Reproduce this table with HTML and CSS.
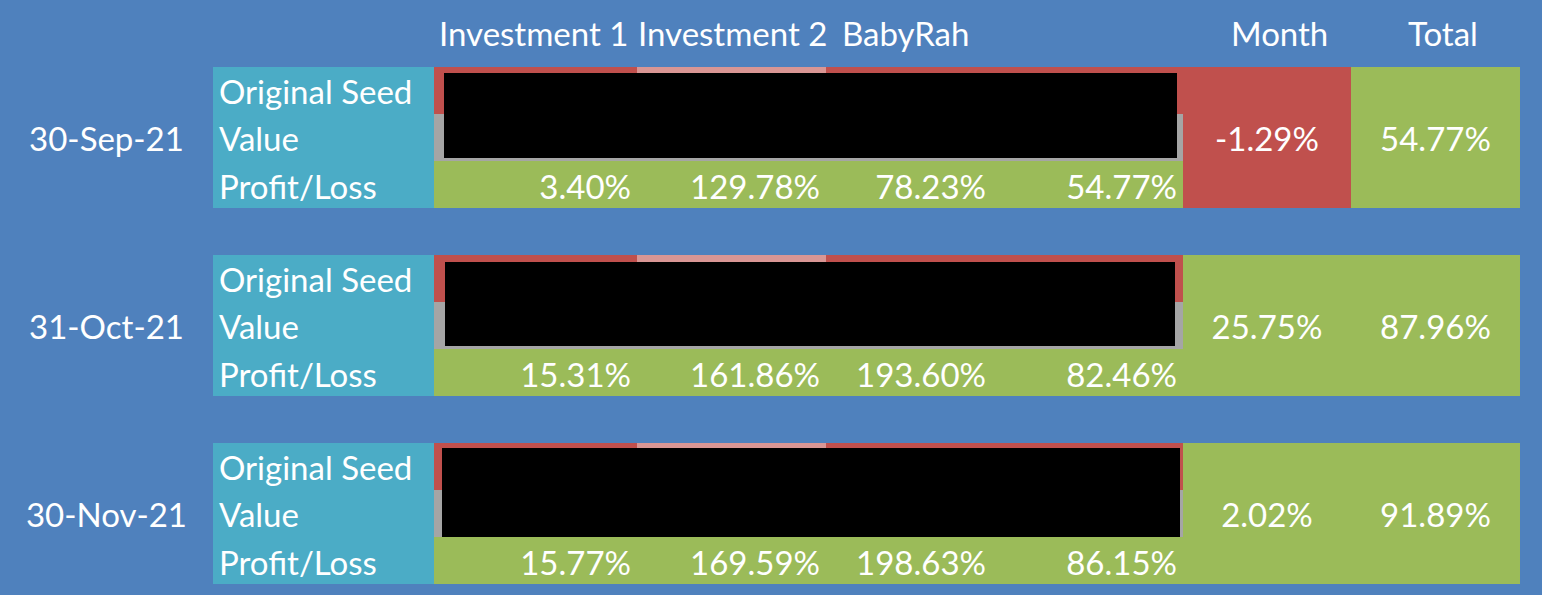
FILE: index.html
```html
<!DOCTYPE html>
<html>
<head>
<meta charset="utf-8">
<link rel="stylesheet" href="styles.css">
</head>
<body>
<div class="sheet">
  <div class="header">
    <div></div>
    <div></div>
    <div class="h h-inv1">Investment 1</div>
    <div class="h h-inv2">Investment 2</div>
    <div class="h h-baby">BabyRah</div>
    <div></div>
    <div class="h h-month">Month</div>
    <div class="h h-total">Total</div>
  </div>

  <div class="block">
    <div class="date">30-Sep-21</div>
    <div class="label r1">Original Seed</div>
    <div class="label r2">Value</div>
    <div class="label r3">Profit/Loss</div>
    <div class="cell seed r1 c3"></div>
    <div class="cell seed alt r1 c4"></div>
    <div class="cell seed r1 c5"></div>
    <div class="cell seed r1 c6"></div>
    <div class="cell value r2 c3"></div>
    <div class="cell value r2 c4"></div>
    <div class="cell value r2 c5"></div>
    <div class="cell value r2 c6"></div>
    <div class="cell pl r3 c3">3.40%</div>
    <div class="cell pl r3 c4">129.78%</div>
    <div class="cell pl r3 c5">78.23%</div>
    <div class="cell pl r3 c6">54.77%</div>
    <div class="month neg">-1.29%</div>
    <div class="total">54.77%</div>
    <div class="redact redact-1"></div>
  </div>

  <div class="block">
    <div class="date">31-Oct-21</div>
    <div class="label r1">Original Seed</div>
    <div class="label r2">Value</div>
    <div class="label r3">Profit/Loss</div>
    <div class="cell seed r1 c3"></div>
    <div class="cell seed alt r1 c4"></div>
    <div class="cell seed r1 c5"></div>
    <div class="cell seed r1 c6"></div>
    <div class="cell value r2 c3"></div>
    <div class="cell value r2 c4"></div>
    <div class="cell value r2 c5"></div>
    <div class="cell value r2 c6"></div>
    <div class="cell pl r3 c3">15.31%</div>
    <div class="cell pl r3 c4">161.86%</div>
    <div class="cell pl r3 c5">193.60%</div>
    <div class="cell pl r3 c6">82.46%</div>
    <div class="month pos">25.75%</div>
    <div class="total">87.96%</div>
    <div class="redact redact-2"></div>
  </div>

  <div class="block">
    <div class="date">30-Nov-21</div>
    <div class="label r1">Original Seed</div>
    <div class="label r2">Value</div>
    <div class="label r3">Profit/Loss</div>
    <div class="cell seed r1 c3"></div>
    <div class="cell seed alt r1 c4"></div>
    <div class="cell seed r1 c5"></div>
    <div class="cell seed r1 c6"></div>
    <div class="cell value r2 c3"></div>
    <div class="cell value r2 c4"></div>
    <div class="cell value r2 c5"></div>
    <div class="cell value r2 c6"></div>
    <div class="cell pl r3 c3">15.77%</div>
    <div class="cell pl r3 c4">169.59%</div>
    <div class="cell pl r3 c5">198.63%</div>
    <div class="cell pl r3 c6">86.15%</div>
    <div class="month pos">2.02%</div>
    <div class="total">91.89%</div>
    <div class="redact redact-3"></div>
  </div>
</div>
</body>
</html>
```

FILE: styles.css
```css
html, body {
  margin: 0;
  padding: 0;
  background: #4f81bd;
}

body {
  width: 1542px;
  height: 595px;
  overflow: hidden;
  font-family: Lato, "Open Sans", sans-serif;
  font-size: 33px;
  color: #ffffff;
}

.sheet {
  display: flex;
  flex-direction: column;
  gap: 47px;
}

.header,
.block {
  display: grid;
  grid-template-columns: 213px 221px 203px 189px 166px 191px 168px 169px;
}

.header {
  height: 67px;
  margin-bottom: -47px;
  line-height: 47px;
  box-sizing: border-box;
  padding-top: 10px;
}

.h { white-space: nowrap; }
.h-inv1 { padding-left: 5px; }
.h-inv2 { padding-left: 1px; }
.h-baby { padding-left: 16px; }
.h-month { padding-left: 48px; }
.h-total { padding-left: 57px; }

.block {
  position: relative;
  grid-template-rows: repeat(3, 47px);
  line-height: 47px;
}

.r1 { grid-row: 1; }
.r2 { grid-row: 2; }
.r3 { grid-row: 3; }
.c3 { grid-column: 3; }
.c4 { grid-column: 4; }
.c5 { grid-column: 5; }
.c6 { grid-column: 6; }

.date {
  grid-column: 1;
  grid-row: 1 / 4;
  display: flex;
  align-items: center;
  justify-content: center;
  padding-top: 1px;
}

.label {
  grid-column: 2;
  background: #4bacc6;
  padding-left: 6px;
  padding-top: 1px;
  white-space: nowrap;
  overflow: hidden;
}

.seed { background: #c0504d; }
.seed.alt { background: #d99694; }
.value { background: #a5a5a5; }
.pl {
  background: #9bbb59;
  text-align: right;
  padding-right: 6px;
  padding-top: 2px;
  overflow: hidden;
}

.label.r3 { padding-top: 2px; }

.month,
.total {
  grid-row: 1 / 4;
  display: flex;
  align-items: center;
  justify-content: center;
  padding-top: 1px;
}

.month { grid-column: 7; }
.total { grid-column: 8; background: #9bbb59; }
.month.neg { background: #c0504d; }
.month.pos { background: #9bbb59; }

.redact {
  position: absolute;
  background: #000000;
}

.redact-1 { left: 444px; top: 6px; width: 733px; height: 85px; }
.redact-2 { left: 445px; top: 7px; width: 730px; height: 84px; }
.redact-3 { left: 442px; top: 5px; width: 738px; height: 89px; }
```
